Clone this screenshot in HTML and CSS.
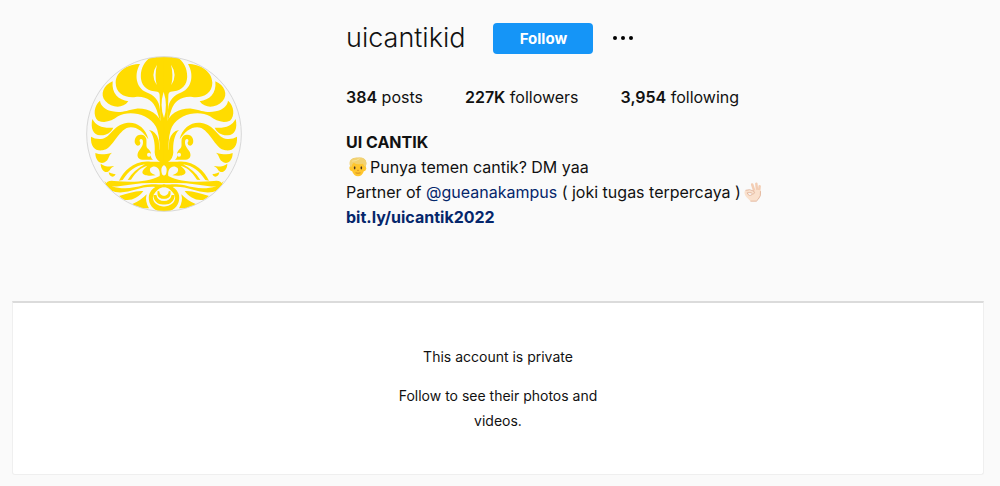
FILE: index.html
```html
<!DOCTYPE html>
<html lang="id">
<head>
    <meta charset="UTF-8">
    <meta name="viewport" content="width=device-width, initial-scale=1.0">
    <title>uicantikid</title>
    <link rel="stylesheet" href="styles.css">
</head>
<body>
<main>
    <header class="profile">
        <div class="avatar">
            <svg viewBox="18 18 468 468" role="img" aria-label="uicantikid">
                <defs>
                    <clipPath id="circle"><circle cx="252" cy="252" r="232"/></clipPath>
                    <g id="half">
                        <!-- crown -->
                        <path d="M253 16H218C190 35 180 60 183 87C187 112 205 124 232 125Q239 126 239 138L242 252H253Z"/>
                        <path d="M180 42C145 42 108 63 107 98C107 130 135 145 167 141C199 138 220 153 230 180L240 212V180C238 150 222 136 199 127C167 113 162 72 180 42Z"/>
                        <path d="M98 94C70 106 59 134 76 153C95 174 128 177 145 154C116 150 94 132 98 94Z"/>
                        <path d="M60 152C42 166 38 198 54 212C77 221 96 212 114 199C145 180 205 189 228 230Q238 248 239 300H251V230C235 188 204 174 169 176C139 181 125 190 97 184C76 180 62 168 60 152Z"/>
                        <path d="M37 207C31 235 39 255 61 256C80 257 94 246 100 233C70 236 48 228 37 207Z"/>
                        <path d="M33 260C31 290 45 304 68 301C98 296 108 252 140 234C165 226 187 242 205 268C197 232 168 214 139 219C101 225 93 260 68 266Q47 269 33 260Z"/>
                        <path d="M46 309C46 334 64 346 78 334C88 326 86 315 96 308C76 313 61 315 46 309Z"/>
                        <path d="M62 341C62 361 78 373 88 362C92 356 95 352 103 348C88 351 74 350 62 341Z"/>
                        <path d="M86 367C88 382 102 384 107 373C103 372 98 372 86 367Z"/>
                        <!-- brow and nose -->
                        <path d="M182 254C167 254 162 269 165 280Q170 291 179 285Q184 279 179 274C177 267 184 264 188 270C191 282 187 290 177 302C168 315 173 328 187 329H219Q210 323 213 309Q210 302 205 297C196 291 201 282 199 267Q195 253 182 254Z"/>
                        <path d="M207 240C221 252 226 282 224 307Q225 328 240 336H253V238H243V299H239L236 270Q229 244 207 240Z"/>
                        <!-- moustache -->
                        <path d="M253 335H212C163 329 132 362 117 392L128 390C147 363 165 347 195 343Q160 361 143 390L153 389C170 363 185 352 202 348C172 371 192 381 227 376Q204 368 211 354C224 342 243 353 239 378C202 397 157 397 102 393Q80 390 77 405Q91 411 116 409C149 404 185 397 222 399H253V377Q244 377 244 360Q244 349 253 345Z"/>
                        <!-- beard -->
                        <path d="M73 392C88 416 142 421 190 406C220 399 240 405 253 403V412C240 412 231 420 224 430C210 446 225 469 253 470V488C217 484 203 460 207 436Q212 418 226 411C179 407 149 433 106 426Q82 419 73 392Z"/>
                        <path d="M132 449C154 454 176 442 190 423C168 421 143 430 117 438Z"/>
                        <path d="M200 433Q181 453 157 462L145 475H207Q194 454 200 433Z"/>
                        <path d="M233 423C229 442 242 448 253 446V438Q239 437 238 424Z"/>
                        <path d="M220 435C220 456 238 466 253 463V453Q233 453 229 435Z"/>
                    </g>
                </defs>
                <circle class="avatar-back" cx="252" cy="252" r="232"/>
                <g class="makara" clip-path="url(#circle)">
                    <use href="#half"/>
                    <use href="#half" transform="translate(504 0) scale(-1 1)"/>
                </g>
                <g class="cutout">
                    <path d="M231 44Q210 75 230 105Q223 75 231 44Z"/>
                    <path d="M273 44Q294 75 274 105Q281 75 273 44Z"/>
                    <path d="M251 125Q238 166 252 204Q264 166 251 125Z"/>
                    <circle cx="207" cy="314" r="6"/>
                    <circle cx="297" cy="314" r="6"/>
                </g>
                <circle class="avatar-ring" cx="252" cy="252" r="232"/>
            </svg>
        </div>
        <section class="info">
            <div class="title">
                <h1>uicantikid</h1>
                <button class="follow" type="button">Follow</button>
                <button class="more" type="button" aria-label="Options">
                    <svg viewBox="0 0 22 6"><circle cx="3" cy="3" r="2"/><circle cx="11" cy="3" r="2"/><circle cx="19" cy="3" r="2"/></svg>
                </button>
            </div>
            <ul class="stats">
                <li><b>384</b> posts</li>
                <li><b>227K</b> followers</li>
                <li><b>3,954</b> following</li>
            </ul>
            <div class="bio">
                <h2>UI CANTIK</h2>
                <p><svg class="emoji person" viewBox="0 0 24 24" role="img" aria-label="🧑🏼">
                    <path fill="#d9a83c" d="M3 12C0 3 7 0 12 1C20 0 24 5 21 12L19 15H5Z"/>
                    <path fill="#ffc62e" d="M3 11Q1 11 2 15Q3 17 5 17Q7 23 12 23T19 17Q21 17 22 14Q22 11 20 11L18 6H6Z"/>
                    <path fill="#f2d272" d="M3 12C-1 2 7 0 12 1C20-1 24 5 21 12Q19 11 18 8Q11 10 7 7Q5 8 4 12Z"/>
                    <path fill="none" stroke="#f9e6a0" d="M5 5Q10 5 14 2"/>
                    <ellipse cx="8" cy="13" rx="1" ry="2" fill="#4b3421"/>
                    <ellipse cx="16" cy="13" rx="1" ry="2" fill="#4b3421"/>
                    <path fill="none" stroke="#c98322" d="M11 16H13M9 19Q12 20 15 19"/>
                </svg>Punya temen cantik? DM yaa</p>
                <p>Partner of <a href="#">@gueanakampus</a> ( joki tugas terpercaya )<svg class="emoji hand" viewBox="0 0 24 24" role="img" aria-label="👌🏻">
                    <!-- raised fingers behind the palm -->
                    <path class="finger" d="M11 3L14 12M16 2L17 12M20 5L19 14"/>
                    <path class="skin" d="M12 11Q15 8 21 10Q23 17 18 21L16 23H9Q7 21 4 18Q1 14 2 11Q4 8 12 11Z"/>
                    <path fill="#fafafa" stroke="#deb095" d="M5 13Q7 18 11 15Q12 12 5 13Z"/>
                    <path fill="none" stroke="#deb095" d="M3 10Q8 8 13 11Q15 13 12 15M9 23H16L18 21Q22 17 21 11"/>
                </svg></p>
                <p><a class="link" href="#">bit.ly/uicantik2022</a></p>
            </div>
        </section>
    </header>
    <section class="private">
        <p>This account is private</p>
        <p>Follow to see their photos and videos.</p>
    </section>
</main>
</body>
</html>
```
FILE: styles.css
```css
*{
    box-sizing: border-box;
}
body{
    margin: 0;
    background: #fafafa;
    color: #111;
    font-family: Inter, "Liberation Sans", sans-serif;
    font-size: 16px;
    line-height: 25px;
}
main{
    padding: 20px 16px 11px 12px;
}
h1, h2, p, ul{
    margin: 0;
    padding: 0;
}
a{
    color: #05266b;
    text-decoration: none;
}
.profile{
    display: flex;
    padding-bottom: 71px;
}
.avatar{
    flex: 0 0 304px;
    margin-right: 30px;
    padding-top: 36px;
}
.avatar svg{
    display: block;
    width: 156px;
    height: 156px;
    margin-left: 74px;
}
.avatar-back, .cutout{
    fill: #f7f7f7;
}
.makara{
    fill: #ffdc00;
}
.avatar-ring{
    fill: none;
    stroke: #d8d8d8;
    stroke-width: 3;
}
.title{
    display: flex;
    align-items: center;
    height: 36px;
}
h1{
    font-size: 27px;
    font-weight: 300;
    line-height: 36px;
}
button{
    border: 0;
    font: inherit;
    cursor: pointer;
}
.follow{
    width: 100px;
    height: 31px;
    margin-left: 28px;
    padding: 0;
    border-radius: 4px;
    background: #1595f7;
    color: #fff;
    font-size: 15px;
    font-weight: 700;
}
.more{
    margin-left: 19px;
    padding: 0;
    background: none;
}
.more svg{
    display: block;
    width: 22px;
    height: 6px;
}
.stats{
    display: flex;
    gap: 42px;
    margin-top: 29px;
    list-style: none;
}
.stats b{
    font-weight: 600;
}
h2, .link{
    font-weight: 700;
}
.bio{
    margin-top: 20px;
}
h2{
    font-size: 16px;
    line-height: 25px;
}
.emoji{
    width: 20px;
    height: 20px;
    vertical-align: -4px;
}
.person{
    margin: 0 2px;
}
.hand{
    margin-left: 2px;
}
.skin{
    fill: #fae1cd;
}
.finger{
    fill: none;
    stroke: #f3cdb3;
    stroke-width: 3;
    stroke-linecap: round;
}
.private{
    display: flex;
    flex-direction: column;
    align-items: center;
    gap: 14px;
    padding: 41px 20px;
    border: 1px solid #efefef;
    border-top: 2px solid #dbdbdb;
    border-radius: 0 0 3px 3px;
    background: #fff;
    font-size: 14px;
    text-align: center;
}
.private p{
    max-width: 230px;
}
```
